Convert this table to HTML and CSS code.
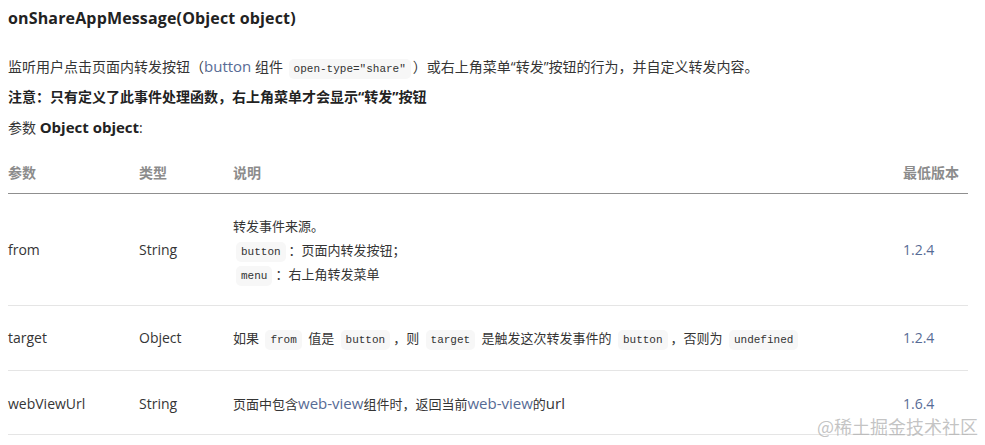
FILE: index.html
```html
<!DOCTYPE html>
<html lang="zh-CN">
<head>
    <meta charset="UTF-8">
    <meta name="viewport" content="width=device-width, initial-scale=1.0">
    <title>onShareAppMessage</title>
    <link rel="stylesheet" href="styles.css">
</head>
<body>
    <div class="doc">
        <h3 class="doc-title">onShareAppMessage(Object object)</h3>
        <p class="doc-text">监听用户点击页面内转发按钮（<a class="link" href="#">button</a> 组件 <code class="code">open-type="share"</code>）或右上角菜单“转发”按钮的行为，并自定义转发内容。</p>
        <p class="doc-text"><strong>注意：只有定义了此事件处理函数，右上角菜单才会显示“转发”按钮</strong></p>
        <p class="doc-text">参数 <strong class="en">Object object</strong>:</p>

        <table class="param-table">
            <colgroup>
                <col class="col-name">
                <col class="col-type">
                <col class="col-desc">
                <col class="col-ver">
            </colgroup>
            <thead>
                <tr>
                    <th>参数</th>
                    <th>类型</th>
                    <th>说明</th>
                    <th>最低版本</th>
                </tr>
            </thead>
            <tbody>
                <tr>
                    <td>from</td>
                    <td>String</td>
                    <td class="desc">
                        转发事件来源。<br>
                        <code class="code code-first">button</code>：页面内转发按钮；<br>
                        <code class="code code-first">menu</code>：右上角转发菜单
                    </td>
                    <td><a class="link" href="#">1.2.4</a></td>
                </tr>
                <tr>
                    <td>target</td>
                    <td>Object</td>
                    <td class="desc">如果 <code class="code">from</code> 值是 <code class="code">button</code>，则 <code class="code">target</code> 是触发这次转发事件的 <code class="code">button</code>，否则为 <code class="code">undefined</code></td>
                    <td><a class="link" href="#">1.2.4</a></td>
                </tr>
                <tr>
                    <td>webViewUrl</td>
                    <td>String</td>
                    <td class="desc">页面中包含<a class="link" href="#">web-view</a>组件时，返回当前<a class="link" href="#">web-view</a>的<span class="en">url</span></td>
                    <td><a class="link" href="#">1.6.4</a></td>
                </tr>
            </tbody>
        </table>
    </div>
    <div class="watermark">@稀土掘金技术社区</div>
</body>
</html>
```

FILE: styles.css
```css
body {
    margin: 0;
    padding: 0;
    background-color: #fff;
    color: #353535;
    font-family: "Open Sans", "Noto Sans CJK SC", sans-serif;
    font-size: 14px;
    line-height: 24px;
}
.doc {
    width: 960px;
    margin-left: 8px;
}
.doc-title {
    margin: 6px 0 0;
    font-size: 16px;
    line-height: 24px;
    font-weight: 700;
    color: #222;
    letter-spacing: 0.15px;
}
.doc-text {
    margin: 6px 0 0;
    font-size: 14px;
}
.doc-title + .doc-text {
    margin-top: 24px;
}
.doc-text strong {
    color: #222;
}
.link {
    color: #576b95;
    text-decoration: none;
}
.doc-text .link,
.desc .link,
.en {
    font-size: 15px;
}
.code {
    font-family: "Liberation Mono", "DejaVu Sans Mono", monospace;
    font-size: 11px;
    line-height: 14px;
    background-color: #f7f7f7;
    padding: 4px 5px;
    margin: 0 3px;
    border-radius: 5px;
    color: #333;
}
.doc-text .code {
    margin: 0 2px;
}
.code-first {
    margin-left: 3px;
}
.param-table {
    width: 960px;
    margin-top: 11px;
    border-collapse: collapse;
    table-layout: fixed;
    font-size: 14px;
}
.col-name { width: 131px; }
.col-type { width: 94px; }
.col-desc { width: 670px; }
.col-ver { width: 65px; }
.param-table th {
    text-align: left;
    font-weight: 700;
    color: #8c8c8c;
    font-size: 14px;
    padding: 10px 0 8px;
    border-bottom: 1px solid #8f8f8f;
}
.param-table td {
    padding: 20px 0;
    border-bottom: 1px solid #e5e5e5;
    vertical-align: middle;
}
.param-table tbody tr:first-child td {
    padding: 20px 0 19px;
}
.param-table tbody tr:last-child td {
    padding: 20px 0 18px;
}
.desc {
    font-size: 13px;
}
.watermark {
    position: absolute;
    right: 7px;
    top: 414px;
    font-family: "Noto Sans CJK SC", sans-serif;
    font-size: 18px;
    line-height: 24px;
    color: rgba(170, 170, 170, 0.7);
}
```
